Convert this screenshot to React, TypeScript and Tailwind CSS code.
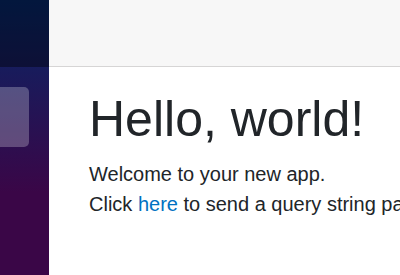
import React from 'react';

export default function App() {
  return (
    <div
      className="flex h-[275px] w-[400px] overflow-hidden bg-white text-[#212529]"
      style={{ fontFamily: '"Liberation Sans", Arial, sans-serif' }}
    >
      {/* Sidebar */}
      <div className="flex w-[49px] shrink-0 flex-col bg-[linear-gradient(180deg,#052767_0%,#3a0647_70%)]">
        <div className="h-[67px] shrink-0 bg-black/40" />
        <div className="pt-[20px]">
          <div className="h-[60px] w-[29px] rounded-r-[5px] bg-white/25" />
        </div>
      </div>

      {/* Main */}
      <div className="flex min-w-0 flex-1 flex-col">
        <div className="h-[67px] shrink-0 border-b border-[#d6d5d5] bg-[#f7f7f7]" />
        <div className="whitespace-nowrap px-[40px] pt-[22px]">
          <h1 className="mb-[10px] text-[50px] font-medium leading-[1.2]">Hello, world!</h1>
          <p className="text-[20px] leading-[30px]">Welcome to your new app.</p>
          <p className="text-[20px] leading-[30px]">
            Click <a href="#" className="text-[#0071c1]">here</a> to send a query string parameter.
          </p>
        </div>
      </div>
    </div>
  );
}
